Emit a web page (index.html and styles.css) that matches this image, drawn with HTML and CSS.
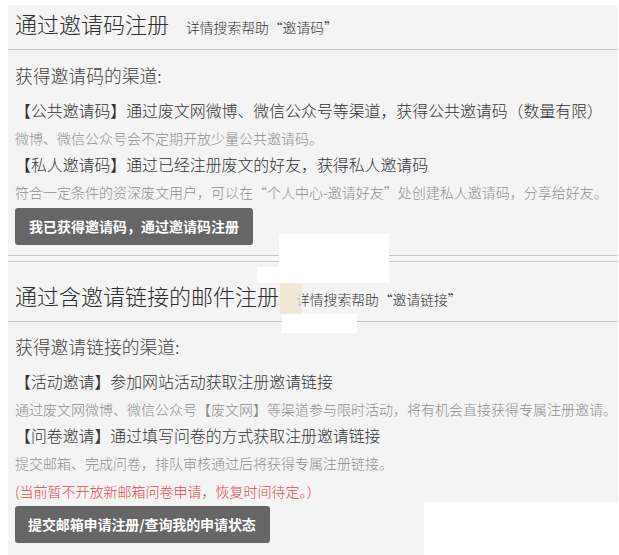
FILE: index.html
```html
<!DOCTYPE html>
<html lang="zh-CN">
<head>
<meta charset="utf-8">
<title>注册</title>
<link rel="stylesheet" href="styles.css">
</head>
<body>
<div class="page">
  <section class="panel panel-first">
    <div class="panel-head">
      <h2 class="title">通过邀请码注册</h2>
      <span class="hint">详情搜索帮助“邀请码”</span>
    </div>
    <div class="panel-body">
      <h3 class="heading">获得邀请码的渠道:</h3>
      <p class="item">【公共邀请码】通过废文网微博、微信公众号等渠道，获得公共邀请码（数量有限）</p>
      <p class="note">微博、微信公众号会不定期开放少量公共邀请码。</p>
      <p class="item">【私人邀请码】通过已经注册废文的好友，获得私人邀请码</p>
      <p class="note">符合一定条件的资深废文用户，可以在“个人中心-邀请好友”处创建私人邀请码，分享给好友。</p>
      <a class="btn btn-first">我已获得邀请码，通过邀请码注册</a>
    </div>
  </section>
  <div class="gap"></div>
  <section class="panel panel-second">
    <div class="panel-head head-second">
      <h2 class="title">通过含邀请链接的邮件注册</h2>
      <span class="hint">详情搜索帮助“邀请链接”</span>
    </div>
    <div class="panel-body body-second">
      <h3 class="heading">获得邀请链接的渠道:</h3>
      <p class="item">【活动邀请】参加网站活动获取注册邀请链接</p>
      <p class="note">通过废文网微博、微信公众号【废文网】等渠道参与限时活动，将有机会直接获得专属注册邀请。</p>
      <p class="item">【问卷邀请】通过填写问卷的方式获取注册邀请链接</p>
      <p class="note">提交邮箱、完成问卷，排队审核通过后将获得专属注册链接。</p>
      <p class="warn">(当前暂不开放新邮箱问卷申请，恢复时间待定。）</p>
      <a class="btn btn-second">提交邮箱申请注册/查询我的申请状态</a>
    </div>
  </section>
  <div class="mask mask-a"></div>
  <div class="mask mask-b"></div>
  <div class="blur"></div>
  <div class="mask mask-c"></div>
  <div class="mask mask-d"></div>
</div>
</body>
</html>
```
FILE: styles.css
```css
html, body {
  margin: 0;
  padding: 0;
  background: #ffffff;
}
body {
  font-family: "Noto Sans CJK SC", "Microsoft YaHei", sans-serif;
  font-weight: 300;
  color: #333;
}
.page {
  position: relative;
  width: 619px;
  height: 555px;
  overflow: hidden;
  padding: 5px 1px 0 8px;
  box-sizing: border-box;
}
.panel {
  background: #f4f4f4;
  padding: 0 0 0 7px;
}
.panel-first {
  border-bottom: 1px solid #c8c8c8;
  padding-bottom: 10px;
}
.gap {
  height: 5px;
  background: #f8f8f8;
}
.panel-second {
  border-top: 1px solid #c8c8c8;
  height: 300px;
}
.panel-head {
  display: flex;
  align-items: baseline;
  height: 45px;
  margin-left: -7px;
  padding-left: 7px;
  border-bottom: 1px solid #c6c6c6;
  box-sizing: border-box;
}
.head-second {
  height: 60px;
  padding-top: 15px;
}
.title {
  margin: 0;
  font-size: 22px;
  line-height: 36px;
  font-weight: 300;
  color: #2e2e2e;
}
.hint {
  margin-left: 17px;
  font-size: 13.8px;
  color: #333;
}
.panel-body {
  padding-top: 10px;
}
.body-second {
  padding-top: 9px;
}
.heading {
  margin: 0 0 8px;
  font-size: 17.8px;
  line-height: 30px;
  font-weight: 300;
  color: #444;
}
.item {
  margin: 0;
  font-size: 15.9px;
  line-height: 26px;
  color: #333;
  white-space: nowrap;
}
.note {
  margin: 0;
  font-size: 14px;
  line-height: 28px;
  color: #8e8e8e;
  white-space: nowrap;
}
.warn {
  margin: 0;
  font-size: 14px;
  line-height: 28px;
  color: #e2474f;
}
.btn {
  display: inline-block;
  background: #666;
  color: #fff;
  font-weight: bold;
  font-size: 14px;
  line-height: 37px;
  height: 37px;
  padding: 0 14px;
  border-radius: 3px;
  margin-top: 2px;
}
.btn-second {
  margin-top: 1px;
  padding: 0 14px 0 13px;
  letter-spacing: -0.1px;
}
.mask {
  position: absolute;
  background: #fff;
}
.mask-a {
  left: 279px;
  top: 234px;
  width: 110px;
  height: 49px;
}
.mask-b {
  left: 257px;
  top: 267px;
  width: 24px;
  height: 16px;
}
.blur {
  position: absolute;
  left: 280px;
  top: 283px;
  width: 22px;
  height: 31px;
  background: linear-gradient(90deg, rgba(238, 230, 205, 0.95), rgba(236, 230, 210, 0.7));
}
.mask-c {
  left: 282px;
  top: 314px;
  width: 75px;
  height: 19px;
}
.mask-d {
  left: 424px;
  top: 502px;
  width: 195px;
  height: 53px;
}
```
